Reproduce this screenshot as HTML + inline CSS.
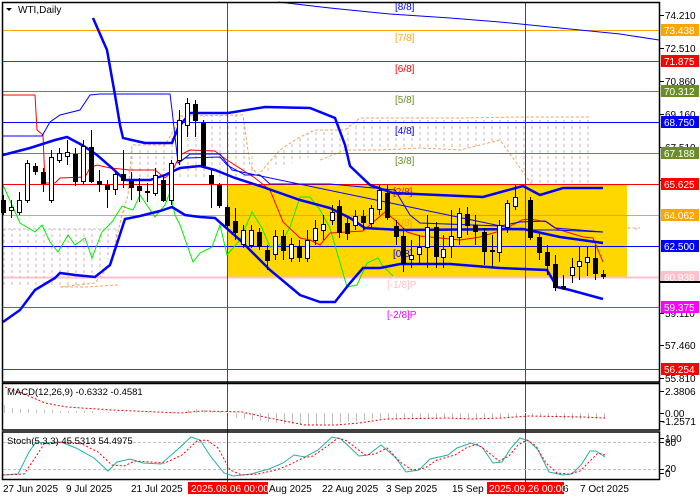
<!DOCTYPE html>
<html><head><meta charset="utf-8"><style>
html,body{margin:0;padding:0;background:#fff;width:700px;height:500px;overflow:hidden}
svg{display:block;font-family:"Liberation Sans",sans-serif}
</style></head><body>
<svg width="700" height="500" viewBox="0 0 700 500" xmlns="http://www.w3.org/2000/svg">
<defs>
<pattern id="hatch" width="8" height="6" patternUnits="userSpaceOnUse">
<line x1="4" y1="0" x2="4" y2="3" stroke="#d9b0b8" stroke-width="1"/>
</pattern>
</defs>
<rect width="700" height="500" fill="#fff"/>
<!-- cloud -->
<polygon fill="url(#hatch)" points="3,229 118,229 125,210 130,150 165,145 175,128 180,116 243,115 250,150 258,175 280,150 298,138 315,130 345,130 360,118 400,118 460,118 520,117 590,117 592,184 605,190 620,222 640,228 640,230 600,228 590,215 560,200 540,196 500,140 460,150 420,148 380,150 345,150 320,155 300,160 270,170 245,178 178,180 132,180 128,195 122,215 115,250 100,270 85,285 60,287 3,285"/>
<polyline fill="none" stroke="#f4a460" stroke-dasharray="3,2" points="118,285 85,287 60,287 95,283 110,265 122,215 128,195 132,145 165,145 175,128 180,116 243,115 250,165 258,175 280,150 298,138 315,130 345,130 360,118 400,118 460,118 520,117 590,117"/>
<polyline fill="none" stroke="#f4a460" stroke-dasharray="3,2" points="320,160 345,150 380,150 420,148 460,150 500,140 540,196 560,200 590,215 600,228 640,228"/>
<polyline fill="none" stroke="#d8b8c8" stroke-dasharray="3,2" points="3,229 118,229 M0,0"/>
<polyline fill="none" stroke="#d8b8c8" stroke-dasharray="3,2" points="3,277 118,277"/>
<!-- yellow box -->
<rect x="227" y="184" width="400" height="93" fill="#ffd700"/>
<!-- murrey lines -->
<g stroke-width="1">
<line x1="3" y1="30.5" x2="659" y2="30.5" stroke="#ffa500"/>
<line x1="3" y1="61.5" x2="659" y2="61.5" stroke="#ff0000"/>
<line x1="3" y1="91.5" x2="659" y2="91.5" stroke="#6b8e23"/>
<line x1="3" y1="122.5" x2="659" y2="122.5" stroke="#0000ff"/>
<line x1="3" y1="153.5" x2="659" y2="153.5" stroke="#6b8e23"/>
<line x1="3" y1="184.5" x2="659" y2="184.5" stroke="#ff0000"/>
<line x1="3" y1="215.5" x2="659" y2="215.5" stroke="#ffa500"/>
<line x1="3" y1="246.5" x2="659" y2="246.5" stroke="#0000ff"/>
<line x1="3" y1="277.5" x2="659" y2="277.5" stroke="#ffc0cb" stroke-width="2"/>
<line x1="3" y1="307.5" x2="659" y2="307.5" stroke="#ff00ff"/>
<line x1="3" y1="369.5" x2="659" y2="369.5" stroke="#ff0000"/>
</g>
<!-- vertical red lines -->
<line x1="227.5" y1="2" x2="227.5" y2="482" stroke="#ff0000"/>
<line x1="525.5" y1="2" x2="525.5" y2="482" stroke="#ff0000"/>
<!-- trend line -->
<polyline fill="none" stroke="#0000ff" points="278,2 330,8 390,14 450,18 500,22 560,28 620,34 659,40"/>
<!-- murrey labels -->
<g font-size="10">
<text x="395" y="10" fill="#0000ff">[8/8]</text>
<text x="395" y="41" fill="#ffa500">[7/8]</text>
<text x="395" y="72" fill="#ff0000">[6/8]</text>
<text x="395" y="103" fill="#6b8e23">[5/8]</text>
<text x="395" y="134" fill="#0000ff">[4/8]</text>
<text x="395" y="164" fill="#6b8e23">[3/8]</text>
<text x="393" y="195" fill="#ff0000">[2/8]</text>
<text x="393" y="226" fill="#ffa500">[1/8]</text>
<text x="393" y="257" fill="#0000ff">[0/8]</text>
<text x="387" y="288" fill="#ffc0cb">[-1/8]P</text>
<text x="387" y="318" fill="#ff00ff">[-2/8]P</text>
</g>
<!-- green line -->
<polyline fill="none" stroke="#00ee00" points="3,185 20,223 35,232 42,225 50,242 58,252 68,235 75,245 85,238 92,258 102,232 112,222 122,206 127,208 133,210 140,195 155,217 165,205 170,192 175,215 180,225 193,262 200,253 212,247 220,225 227,255 240,240 252,212 262,228 270,247 280,245 290,227 300,197 310,197 320,210 330,228 347,287 357,285 367,263 378,258 382,265 393,276"/>
<!-- thin red -->
<polyline fill="none" stroke="#ff0000" points="3,95 35,95 37,130 43,135 45,183 55,183 60,178 85,177 90,168 97,165 110,168 130,170 155,170 165,178 172,172 180,155 190,150 215,151 220,155 227,160 255,178 270,190 283,222 300,238 310,240 320,245 330,233 363,231 385,212 395,220 407,232 420,236 460,240 480,237 503,230 522,220 530,219 547,222 557,229 583,237 593,238 603,262"/>
<!-- thin blue -->
<polyline fill="none" stroke="#0000ff" points="3,136 42,136 50,122 60,115 80,110 90,95 100,94 170,94 172,110 178,163 185,158 220,157 227,165 245,175 260,175 270,184 330,184 395,190 410,215 420,223 500,226 520,222 545,221 555,228 603,232"/>
<polyline fill="none" stroke="#0000ff" points="180,162 190,154 220,154 232,170 520,230 555,230 603,232"/>
<!-- thick blue bands -->
<g fill="none" stroke="#0000ff" stroke-width="2.5">
<polyline points="93,18 107,50 115,95 120,125 123,138 145,143 172,143 178,128 190,113 228,113 265,107 310,108 335,118 345,145 350,166 370,185 393,193 483,197 523,186 540,195 563,188 603,188"/>
<polyline points="3,155 30,148 55,140 67,137 82,145 97,155 112,168 125,180 150,180 165,175 180,168 200,166 215,170 235,178 260,186 300,200 330,208 350,218 365,228 400,230 523,229 560,237 603,243"/>
<polyline points="3,322 20,310 35,290 55,278 60,273 75,275 95,277 110,265 125,219 140,216 160,211 172,207 185,215 200,217 215,218 240,240 270,270 300,295 320,302 335,302 350,283 363,268 380,268 400,264 450,264 500,268 547,270 557,287 570,290 603,299"/>
</g>
<!-- candles -->
<g stroke="#000" stroke-width="1">
<path d="M3.5,195V215M11.5,200V218M19.5,192V215M27.5,160V203M35.5,163V175M43.5,168V192M51.5,150V203M59.5,148V163M67.5,140V165M75.5,148V186M83.5,140V185M91.5,130V183M99.5,170V192M107.5,180V208M115.5,170V195M123.5,150V188M131.5,172V200M139.5,178V202M147.5,183V202M155.5,168V196M163.5,175V202M171.5,160V205M179.5,110V165M187.5,98V137M195.5,100V137M203.5,120V168M211.5,170V208M219.5,183V208M227.5,205V228M235.5,208V240M243.5,225V248M251.5,225V248M259.5,228V250M267.5,245V270M275.5,230V260M283.5,230V260M291.5,238V262M299.5,240V262M307.5,230V262M315.5,220V245M323.5,215V240M332.5,205V225M339.5,200V238M347.5,218V240M355.5,210V230M363.5,210V230M371.5,205V228M379.5,185V215M387.5,185V220M396.5,220V245M403.5,228V272M411.5,240V268M419.5,235V265M427.5,215V268M436.5,222V268M443.5,235V268M451.5,210V258M459.5,208V245M467.5,207V235M475.5,215V245M484.5,228V265M492.5,235V268M499.5,220V262M507.5,200V233M515.5,185V210M530.5,197V240M539.5,234V260M547.5,245V275M555.5,255V291M563.5,275V290M572.5,258V283M579.5,247V280M587.5,247V276M595.5,245V280M603.5,270V279"/>
</g>
<g stroke="#000" stroke-width="1">
<!-- black bodies -->
<g fill="#000">
<rect x="1.5" y="200.5" width="4" height="12"/><rect x="33.5" y="166.5" width="4" height="5"/><rect x="41.5" y="172.5" width="4" height="11"/><rect x="73.5" y="154.5" width="4" height="27"/><rect x="89.5" y="147.5" width="4" height="34"/><rect x="97.5" y="181.5" width="4" height="3"/><rect x="105.5" y="185.5" width="4" height="4"/><rect x="121.5" y="174.5" width="4" height="6"/><rect x="129.5" y="181.5" width="4" height="6"/><rect x="137.5" y="186.5" width="4" height="4"/><rect x="145.5" y="191.5" width="4" height="1"/><rect x="161.5" y="180.5" width="4" height="20"/><rect x="193.5" y="104.5" width="4" height="16"/><rect x="201.5" y="123.5" width="4" height="42"/><rect x="209.5" y="175.5" width="4" height="8"/><rect x="217.5" y="185.5" width="4" height="20"/><rect x="225.5" y="207.5" width="4" height="18"/><rect x="233.5" y="221.5" width="4" height="11"/><rect x="257.5" y="232.5" width="4" height="14"/><rect x="265.5" y="250.5" width="4" height="10"/><rect x="281.5" y="236.5" width="4" height="14"/><rect x="297.5" y="246.5" width="4" height="11"/><rect x="337.5" y="206.5" width="4" height="26"/><rect x="345.5" y="223.5" width="4" height="10"/><rect x="361.5" y="216.5" width="4" height="6"/><rect x="385.5" y="193.5" width="4" height="24"/><rect x="394.5" y="226.5" width="4" height="10"/><rect x="401.5" y="236.5" width="4" height="27"/><rect x="434.5" y="227.5" width="4" height="29"/><rect x="465.5" y="214.5" width="4" height="11"/><rect x="473.5" y="225.5" width="4" height="6"/><rect x="482.5" y="232.5" width="4" height="19"/><rect x="490.5" y="250.5" width="4" height="1"/><rect x="528.5" y="200.5" width="4" height="37"/><rect x="537.5" y="237.5" width="4" height="15"/><rect x="545.5" y="252.5" width="4" height="13"/><rect x="553.5" y="264.5" width="4" height="23"/><rect x="561.5" y="286.5" width="4" height="2"/><rect x="593.5" y="258.5" width="4" height="15"/><rect x="601.5" y="274.5" width="4" height="2"/>
</g>
<g fill="#fff">
<rect x="9.5" y="207.5" width="4" height="3"/><rect x="17.5" y="200.5" width="4" height="12"/><rect x="25.5" y="163.5" width="4" height="37"/><rect x="49.5" y="157.5" width="4" height="43"/><rect x="57.5" y="153.5" width="4" height="7"/><rect x="65.5" y="152.5" width="4" height="4"/><rect x="81.5" y="146.5" width="4" height="35"/><rect x="113.5" y="174.5" width="4" height="15"/><rect x="153.5" y="175.5" width="4" height="18"/><rect x="169.5" y="163.5" width="4" height="37"/><rect x="177.5" y="120.5" width="4" height="40"/><rect x="185.5" y="103.5" width="4" height="22"/><rect x="241.5" y="230.5" width="4" height="14"/><rect x="249.5" y="230.5" width="4" height="15"/><rect x="273.5" y="236.5" width="4" height="18"/><rect x="289.5" y="244.5" width="4" height="14"/><rect x="305.5" y="240.5" width="4" height="18"/><rect x="313.5" y="228.5" width="4" height="12"/><rect x="321.5" y="224.5" width="4" height="6"/><rect x="330.5" y="212.5" width="4" height="8"/><rect x="353.5" y="216.5" width="4" height="9"/><rect x="369.5" y="208.5" width="4" height="15"/><rect x="377.5" y="190.5" width="4" height="19"/><rect x="409.5" y="255.5" width="4" height="4"/><rect x="417.5" y="247.5" width="4" height="7"/><rect x="425.5" y="227.5" width="4" height="20"/><rect x="441.5" y="249.5" width="4" height="8"/><rect x="449.5" y="236.5" width="4" height="10"/><rect x="457.5" y="213.5" width="4" height="24"/><rect x="497.5" y="225.5" width="4" height="27"/><rect x="505.5" y="203.5" width="4" height="24"/><rect x="513.5" y="197.5" width="4" height="9"/><rect x="570.5" y="267.5" width="4" height="8"/><rect x="577.5" y="261.5" width="4" height="5"/><rect x="585.5" y="257.5" width="4" height="5"/>
</g>
</g>
<!-- title -->
<path d="M6,8 L12,8 L9,11 Z" fill="#000"/>
<text x="18" y="13" font-size="10" fill="#000">WTI,Daily</text>
<!-- MACD pane -->
<line x1="3" y1="412.5" x2="659" y2="412.5" stroke="#fff"/>
<g stroke="#c0c0c0" stroke-width="1">
<path d="M4.5,405V413M12.5,408V413M20.5,409V413M28.5,409V413M36.5,410V413M44.5,410V413M52.5,410V413M60.5,411V413M68.5,411V413M76.5,411V413M84.5,411V413M92.5,411V413M100.5,412V413M108.5,412V413M116.5,412V413M124.5,412V413M148.5,412V413M172.5,412V413M188.5,410V413M196.5,409V413M204.5,410V413M212.5,411V413M220.5,411V413M236.5,413V418M244.5,413V419M252.5,413V420M260.5,413V421M268.5,413V422M276.5,413V423M284.5,413V424M292.5,413V424M300.5,413V425M308.5,413V425M316.5,413V425M324.5,413V424M332.5,413V424M340.5,413V423M348.5,413V422M356.5,413V421M364.5,413V420M372.5,413V419M380.5,413V419M388.5,413V419M396.5,413V419M404.5,413V419M412.5,413V419M420.5,413V419M428.5,413V419M436.5,413V419M444.5,413V418M452.5,413V418M460.5,413V418M468.5,413V418M476.5,413V418M484.5,413V418M492.5,413V418M500.5,413V418M508.5,413V418M516.5,413V417M532.5,413V416M540.5,413V416M548.5,413V417M556.5,413V418M564.5,413V419M572.5,413V419M580.5,413V419M588.5,413V419M596.5,413V419M604.5,413V419"/>
</g>
<polyline fill="none" stroke="#ff0000" stroke-dasharray="2,2" points="5,387 22,393 45,403 67,407 112,410 180,413 202,411 242,412 269,418 305,425 336,425 359,423 386,419 448,418 471,419 502,418 529,416 583,417 605,418"/>
<text x="7" y="395" font-size="9.5" fill="#000">MACD(12,26,9) -0.6332 -0.4581</text>
<!-- Stoch pane -->
<line x1="3" y1="442.5" x2="659" y2="442.5" stroke="#c0c0c0" stroke-dasharray="3,2"/>
<line x1="3" y1="469.5" x2="659" y2="469.5" stroke="#c0c0c0" stroke-dasharray="3,2"/>
<polyline fill="none" stroke="#20b2aa" points="3,475 18,474 29,452 36,442 45,443 61,442 76,448 94,458 108,471 117,462 130,459 143,463 161,464 177,450 191,437 200,440 211,457 224,473 233,476 251,474 269,469 283,463 294,455 305,457 318,450 332,437 341,439 359,456 368,455 381,445 395,457 406,472 419,470 430,459 448,455 457,448 471,443 482,447 493,463 502,462 511,448 520,438 529,441 538,450 549,472 563,475 572,474 581,465 590,451 596,451 605,457"/>
<polyline fill="none" stroke="#ff0000" stroke-dasharray="2,2" points="3,475 24,474 35,458 44,444 55,443 67,442 82,444 98,452 112,465 124,466 135,461 150,462 165,463 182,455 197,441 207,440 218,448 230,470 242,475 258,474 276,470 289,465 303,458 313,456 326,447 338,438 347,441 365,455 375,454 387,448 400,462 412,470 425,468 437,460 455,455 466,448 477,444 488,452 499,461 509,456 518,445 527,440 536,446 546,463 557,473 569,474 580,471 590,461 598,453 605,455"/>
<text x="7" y="444" font-size="9.5" fill="#000">Stoch(5,3,3) 45.5313 54.4975</text>
<!-- pane borders -->
<g fill="none" stroke="#000" stroke-width="1.5">
<rect x="2.5" y="2.5" width="657" height="379.5"/>
<rect x="2.5" y="383.5" width="657" height="46.5"/>
<rect x="2.5" y="432" width="657" height="47.5"/>
</g>
<!-- axis ticks -->
<g stroke="#000">
<path d="M660,15.5h4M660,48.5h4M660,81.5h4M660,114.5h4M660,147.5h4M660,180.5h4M660,313.5h4M660,345.5h4M660,378.5h4M660,391.5h4M660,413.5h4M660,421.5h4M660,438.5h4M660,442.5h4M660,469.5h4M660,473.5h4"/>
</g>
<g font-size="10" fill="#000">
<text x="665" y="19">74.210</text>
<text x="665" y="52">72.510</text>
<text x="665" y="85">70.860</text>
<text x="665" y="118">69.160</text>
<text x="665" y="151">67.510</text>
<text x="665" y="317">59.110</text>
<text x="665" y="349">57.460</text>
<text x="665" y="382">55.810</text>
<text x="665" y="395">2.3806</text>
<text x="665" y="417">0.00</text>
<text x="662" y="425">-1.2571</text>
<text x="665" y="442">100</text>
<text x="665" y="446">80</text>
<text x="665" y="472">20</text>
<text x="665" y="477">0</text>
</g>
<!-- colored labels -->
<g font-size="10">
<rect x="661" y="24" width="38" height="12" fill="#ffa500"/><text x="664" y="34" fill="#fff">73.438</text>
<rect x="661" y="55" width="38" height="12" fill="#ff0000"/><text x="664" y="65" fill="#fff">71.875</text>
<rect x="661" y="85" width="38" height="12" fill="#6b8e23"/><text x="664" y="95" fill="#fff">70.312</text>
<rect x="661" y="116" width="38" height="12" fill="#0000ff"/><text x="664" y="126" fill="#fff">68.750</text>
<rect x="661" y="147" width="38" height="12" fill="#6b8e23"/><text x="664" y="157" fill="#fff">67.188</text>
<rect x="661" y="178" width="38" height="12" fill="#ff0000"/><text x="664" y="188" fill="#fff">65.625</text>
<rect x="661" y="209" width="38" height="12" fill="#ffa500"/><text x="664" y="219" fill="#fff">64.062</text>
<rect x="661" y="240" width="38" height="12" fill="#0000ff"/><text x="664" y="250" fill="#fff">62.500</text>
<rect x="661" y="271" width="38" height="12" fill="#ffc0cb"/><text x="664" y="281" fill="#fff">60.938</text>
<rect x="660" y="281" width="40" height="2" fill="#000"/>
<rect x="661" y="301" width="38" height="12" fill="#ff00ff"/><text x="664" y="311" fill="#fff">59.375</text>
<rect x="661" y="363" width="38" height="12" fill="#ff0000"/><text x="664" y="373" fill="#fff">56.254</text>
</g>
<!-- date axis -->
<g font-size="10" fill="#000">
<text x="3" y="492">27 Jun 2025</text>
<text x="66" y="492">9 Jul 2025</text>
<text x="131" y="492">21 Jul 2025</text>
<text x="269" y="492">Aug 2025</text>
<text x="322" y="492">22 Aug 2025</text>
<text x="386" y="492">3 Sep 2025</text>
<text x="452" y="492">15 Sep</text>
<text x="563" y="492">6</text>
<text x="580" y="492">7 Oct 2025</text>
</g>
<rect x="188" y="482" width="80" height="12" fill="#ff0000"/>
<text x="191" y="492" font-size="10" fill="#fff">2025.08.06 00:00</text>
<rect x="487" y="482" width="77" height="12" fill="#ff0000"/>
<text x="489" y="492" font-size="10" fill="#fff">2025.09.26 00:00</text>
</svg>
</body></html>
